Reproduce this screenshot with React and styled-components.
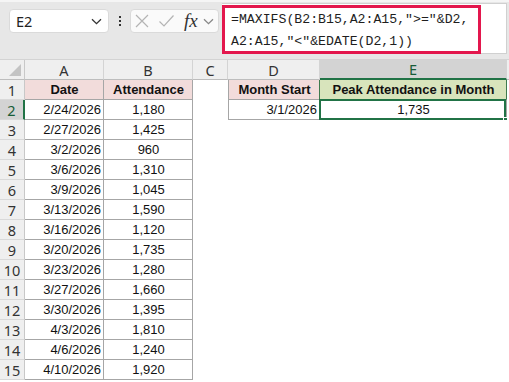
import React from 'react';
import styled, { createGlobalStyle } from 'styled-components';

const GlobalStyle = createGlobalStyle`
  html, body {
    margin: 0;
    padding: 0;
    background: #ffffff;
  }
  body {
    width: 509px;
    height: 382px;
    overflow: hidden;
  }
`;

const Window = styled.div`
  width: 509px;
  height: 382px;
  overflow: hidden;
  background: #ffffff;
  font-family: "Liberation Sans", Arial, sans-serif;
`;

const Toolbar = styled.div`
  height: 60px;
  box-sizing: border-box;
  background: #e7e7e7;
  border-top: 2px solid #f5f5f5;
  border-bottom: 1px solid #d3d3d3;
  display: flex;
  align-items: flex-start;
  padding: 1px 2px 0 9px;
`;

const NameBox = styled.div`
  width: 100px;
  height: 24px;
  margin-top: 6px;
  box-sizing: border-box;
  background: #ffffff;
  border: 1px solid #dadada;
  border-radius: 4px;
  display: flex;
  align-items: center;
  justify-content: space-between;
  padding: 0 6px 0 6px;
  font-family: "Noto Sans", "Open Sans", sans-serif;
  font-size: 14.5px;
  color: #222;
`;

const Dots = styled.div`
  width: 21px;
  height: 24px;
  margin-top: 6px;
  display: flex;
  flex-direction: column;
  align-items: center;
  justify-content: center;
  gap: 2px;
`;

const Dot = styled.span`
  width: 2px;
  height: 2px;
  background: #333;
`;

const FxBox = styled.div`
  width: 89px;
  height: 24px;
  margin-top: 6px;
  box-sizing: border-box;
  background: #fafafa;
  border: 1px solid #dadada;
  border-radius: 4px;
  display: flex;
  align-items: center;
  padding: 0 4px 0 3px;
  gap: 8px;
`;

const Fx = styled.span`
  font-family: "Liberation Serif", "DejaVu Serif", serif;
  font-style: italic;
  font-size: 19px;
  color: #333;
  margin-left: 1px;
  margin-right: -3px;
`;

const FormulaBar = styled.div`
  flex: 1;
  height: 51px;
  margin-left: 3px;
  box-sizing: border-box;
  background: #ffffff;
  border: 1px solid #d0d0d0;
  border-left: none;
  display: flex;
`;

const FormulaText = styled.div`
  width: 259px;
  height: 49px;
  margin-top: 1px;
  box-sizing: border-box;
  border: 3px solid #e3174d;
  padding: 1px 0 0 6px;
  font-family: "Liberation Mono", "DejaVu Sans Mono", monospace;
  font-size: 13.2px;
  line-height: 22px;
  color: #1e1e1e;
  white-space: pre;
`;

const Sheet = styled.div`
  display: grid;
  grid-template-columns: 25px 79px 89px 35px 92px 187px 1fr;
  grid-auto-rows: 20px;
`;

const Corner = styled.div`
  background: #efefef;
  border-right: 1px solid #c8c8c8;
  border-bottom: 1px solid #bdbdbd;
  box-sizing: border-box;
  display: flex;
  align-items: flex-end;
  justify-content: flex-end;
  padding: 0 3px 3px 0;
`;

const ColHead = styled.div`
  box-sizing: border-box;
  background: ${p => (p.$sel ? '#d3d3d3' : '#efefef')};
  border-right: 1px solid #d4d4d4;
  border-bottom: ${p => (p.$sel ? '2px solid #217346' : '1px solid #bdbdbd')};
  color: ${p => (p.$sel ? '#185c37' : '#333')};
  font-family: "Noto Sans", "Open Sans", sans-serif;
  font-size: 14.5px;
  display: flex;
  align-items: center;
  justify-content: center;
`;

const RowHead = styled.div`
  box-sizing: border-box;
  background: ${p => (p.$sel ? '#d3d3d3' : '#efefef')};
  border-right: ${p => (p.$sel ? '2px solid #217346' : '1px solid #c8c8c8')};
  border-bottom: 1px solid #d9d9d9;
  color: ${p => (p.$sel ? '#185c37' : '#333')};
  font-family: "Noto Sans", "Open Sans", sans-serif;
  font-size: 14.5px;
  display: flex;
  align-items: center;
  justify-content: center;
`;

const Cell = styled.div`
  position: relative;
  box-sizing: border-box;
  background: ${p => p.$bg || '#ffffff'};
  border-right: ${p => (p.$boxed ? `1px solid ${p.$edge || '#a6a6a6'}` : 'none')};
  border-bottom: ${p => (p.$boxed ? '1px solid #a6a6a6' : 'none')};
  border-left: ${p => (p.$left ? '1px solid #a6a6a6' : 'none')};
  padding: 0 2px 0 3px;
  font-size: 13px;
  font-weight: ${p => (p.$bold ? 700 : 400)};
  color: #111;
  line-height: 20px;
  text-align: ${p => p.$align || 'left'};
  white-space: nowrap;
  overflow: visible;
`;

const Selection = styled.span`
  position: absolute;
  left: -1px;
  top: -1px;
  right: 0;
  bottom: -1px;
  border: 2px solid #217346;
  pointer-events: none;
`;

const Handle = styled.span`
  position: absolute;
  right: -3px;
  bottom: -4px;
  width: 5px;
  height: 5px;
  background: #217346;
  border-left: 1px solid #fff;
  border-top: 1px solid #fff;
`;

const rows = [
  ['2/24/2026', '1,180'],
  ['2/27/2026', '1,425'],
  ['3/2/2026', '960'],
  ['3/6/2026', '1,310'],
  ['3/9/2026', '1,045'],
  ['3/13/2026', '1,590'],
  ['3/16/2026', '1,120'],
  ['3/20/2026', '1,735'],
  ['3/23/2026', '1,280'],
  ['3/27/2026', '1,660'],
  ['3/30/2026', '1,395'],
  ['4/3/2026', '1,810'],
  ['4/6/2026', '1,240'],
  ['4/10/2026', '1,920'],
];

const PINK = '#f2dcdb';
const GREEN = '#d8e4bc';

const Chevron = ({ color = '#333' }) => (
  <svg width="11" height="7" viewBox="0 0 11 7">
    <path d="M1 1.2 L5.5 5.6 L10 1.2" fill="none" stroke={color} strokeWidth="1.3" />
  </svg>
);

const CrossIcon = () => (
  <svg width="16" height="16" viewBox="0 0 16 16">
    <path d="M2 2 L14 14 M14 2 L2 14" stroke="#b4b4b4" strokeWidth="1.2" fill="none" />
  </svg>
);

const CheckIcon = () => (
  <svg width="17" height="16" viewBox="0 0 17 16">
    <path d="M1.5 8.5 L6 13 L15.5 2.5" stroke="#b4b4b4" strokeWidth="1.2" fill="none" />
  </svg>
);

export default function App() {
  return (
    <Window>
      <GlobalStyle />
      <Toolbar>
        <NameBox>
          <span>E2</span>
          <Chevron />
        </NameBox>
        <Dots>
          <Dot />
          <Dot />
          <Dot />
        </Dots>
        <FxBox>
          <CrossIcon />
          <CheckIcon />
          <Fx>fx</Fx>
          <Chevron color="#888" />
        </FxBox>
        <FormulaBar>
          <FormulaText>
            {'=MAXIFS(B2:B15,A2:A15,">="&D2,\nA2:A15,"<"&EDATE(D2,1))'}
          </FormulaText>
        </FormulaBar>
      </Toolbar>

      <Sheet>
        <Corner>
          <svg width="12" height="12" viewBox="0 0 12 12">
            <path d="M12 0 L12 12 L0 12 Z" fill="#c3c3c3" />
          </svg>
        </Corner>
        {['A', 'B', 'C', 'D', 'E', ''].map(l => (
          <ColHead key={l || 'f'} $sel={l === 'E'}>{l}</ColHead>
        ))}

        <RowHead>1</RowHead>
        <Cell $boxed $bg={PINK} $bold $align="center">Date</Cell>
        <Cell $boxed $bg={PINK} $bold $align="center">Attendance</Cell>
        <Cell />
        <Cell $boxed $left $bg={PINK} $bold $align="center" $edge="#3f7a4d">Month Start</Cell>
        <Cell $boxed $bg={GREEN} $bold $align="center" $edge="#3f7a4d">Peak Attendance in Month</Cell>
        <Cell />

        {rows.map(([date, count], i) => {
          const n = i + 2;
          return (
            <React.Fragment key={n}>
              <RowHead $sel={n === 2}>{n}</RowHead>
              <Cell $boxed $align="right">{date}</Cell>
              <Cell $boxed $align="center">{count}</Cell>
              <Cell />
              {n === 2 ? (
                <>
                  <Cell $boxed $left $align="right">3/1/2026</Cell>
                  <Cell $boxed $align="center">
                    1,735
                    <Selection />
                    <Handle />
                  </Cell>
                </>
              ) : (
                <>
                  <Cell />
                  <Cell />
                </>
              )}
              <Cell />
            </React.Fragment>
          );
        })}
      </Sheet>
    </Window>
  );
}
